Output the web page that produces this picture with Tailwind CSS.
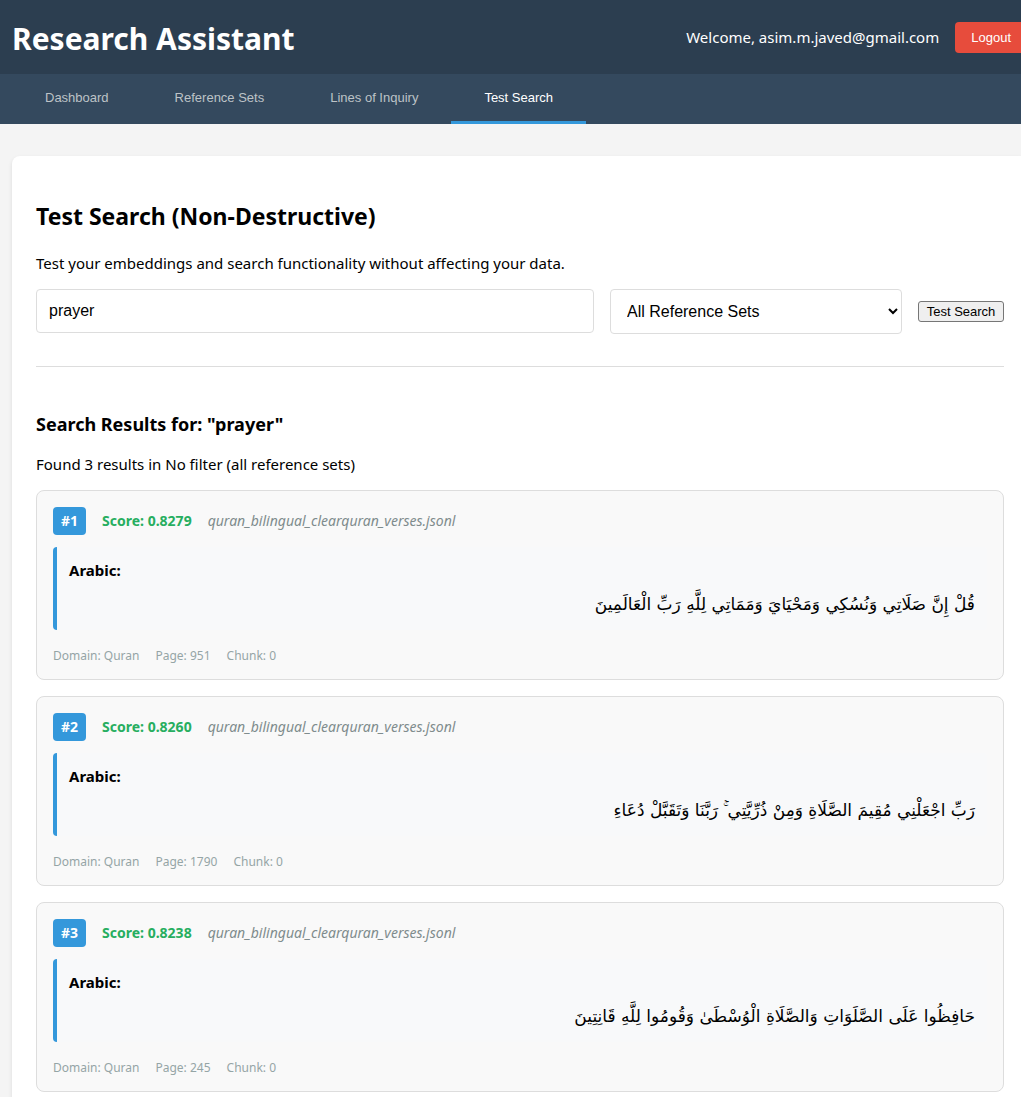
<!DOCTYPE html>
<html lang="en">
<head>
<meta charset="utf-8">
<meta name="viewport" content="width=device-width, initial-scale=1">
<title>Research Assistant</title>
<script src="https://cdn.jsdelivr.net/npm/@tailwindcss/browser@4"></script>
</head>
<body class="min-h-screen overflow-x-hidden bg-[#f4f4f4] font-['Segoe_UI','Noto_Sans',sans-serif] text-[15px] leading-6 text-black">
<header class="flex h-[74px] items-center justify-between bg-[#2c3e50] pl-3 text-white">
  <h1 class="pt-1 text-[30px] leading-10 font-bold">Research Assistant</h1>
  <div class="flex items-center gap-4">
    <span>Welcome, asim.m.javed@gmail.com</span>
    <button type="button" class="h-[31px] rounded-l bg-[#e74c3c] pr-2.5 pl-4 font-['Liberation_Sans',sans-serif] text-[13px] leading-[15px]">Logout</button>
  </div>
</header>
<nav class="flex h-[50px] bg-[#34495e] pl-3 font-['Liberation_Sans',sans-serif] text-[13px] leading-[15px] text-[#bdc3c7]">
  <button type="button" class="border-b-[3px] border-transparent px-[33px]">Dashboard</button>
  <button type="button" class="border-b-[3px] border-transparent px-[33px]">Reference Sets</button>
  <button type="button" class="border-b-[3px] border-transparent px-[33px]">Lines of Inquiry</button>
  <button type="button" class="border-b-[3px] border-[#3498db] px-[33px] text-white">Test Search</button>
</nav>
<main class="mt-8 ml-3 rounded-l-lg bg-white pt-[42px] pr-[17px] pb-12 pl-6 shadow-[0_2px_4px_rgba(0,0,0,0.1)]">
  <h2 class="text-[23px] leading-9 font-bold">Test Search (Non-Destructive)</h2>
  <p class="mt-[17px]">Test your embeddings and search functionality without affecting your data.</p>
  <form class="mt-3.5 flex items-center gap-4 font-['Liberation_Sans',sans-serif] text-base">
    <input type="text" value="prayer" aria-label="Search query" class="h-11 min-w-0 flex-1 self-start rounded border border-[#ddd] bg-white px-3">
    <select aria-label="Reference set" class="h-[45px] w-[292px] rounded border border-[#ddd] bg-white px-3">
      <option>All Reference Sets</option>
    </select>
    <button type="button" class="h-[21px] w-[86px] rounded-[3px] border border-[#767676] bg-[#efefef] text-[13px] leading-[15px]">Test Search</button>
  </form>
  <section class="mt-8 border-t border-[#ddd] pt-[43px]">
    <h3 class="text-[18px] leading-7 font-bold">Search Results for: "prayer"</h3>
    <p class="mt-3.5">Found 3 results in No filter (all reference sets)</p>
    <div class="mt-3.5 flex flex-col gap-4">
      <article class="rounded-lg border border-[#ddd] bg-[#f9f9f9] px-4 pt-4 pb-[15px]">
        <div class="flex items-center gap-4 text-[14px] leading-5">
          <span class="rounded bg-[#3498db] px-2 py-1 font-bold text-white">#1</span>
          <span class="font-bold text-[#27ae60]">Score: 0.8279</span>
          <span class="text-[#7f8c8d] italic">quran_bilingual_clearquran_verses.jsonl</span>
        </div>
        <div class="mt-3 rounded border-l-4 border-[#3498db] bg-[#f8f9fa] p-3">
          <strong class="block text-[15px] leading-[23px]">Arabic:</strong>
          <p dir="rtl" lang="ar" class="mt-[9px] font-['Segoe_UI','DejaVu_Sans',sans-serif] text-[17px] leading-[27px]">قُلْ إِنَّ صَلَاتِي وَنُسُكِي وَمَحْيَايَ وَمَمَاتِي لِلَّهِ رَبِّ الْعَالَمِينَ</p>
        </div>
        <div class="mt-[17px] flex gap-4 text-[12px] leading-[17px] text-[#95a5a6]"><span>Domain: Quran</span><span>Page: 951</span><span>Chunk: 0</span></div>
      </article>
      <article class="rounded-lg border border-[#ddd] bg-[#f9f9f9] px-4 pt-4 pb-[15px]">
        <div class="flex items-center gap-4 text-[14px] leading-5">
          <span class="rounded bg-[#3498db] px-2 py-1 font-bold text-white">#2</span>
          <span class="font-bold text-[#27ae60]">Score: 0.8260</span>
          <span class="text-[#7f8c8d] italic">quran_bilingual_clearquran_verses.jsonl</span>
        </div>
        <div class="mt-3 rounded border-l-4 border-[#3498db] bg-[#f8f9fa] p-3">
          <strong class="block text-[15px] leading-[23px]">Arabic:</strong>
          <p dir="rtl" lang="ar" class="mt-[9px] font-['Segoe_UI','DejaVu_Sans',sans-serif] text-[17px] leading-[27px]">رَبِّ اجْعَلْنِي مُقِيمَ الصَّلَاةِ وَمِنْ ذُرِّيَّتِي ۚ رَبَّنَا وَتَقَبَّلْ دُعَاءِ</p>
        </div>
        <div class="mt-[17px] flex gap-4 text-[12px] leading-[17px] text-[#95a5a6]"><span>Domain: Quran</span><span>Page: 1790</span><span>Chunk: 0</span></div>
      </article>
      <article class="rounded-lg border border-[#ddd] bg-[#f9f9f9] px-4 pt-4 pb-[15px]">
        <div class="flex items-center gap-4 text-[14px] leading-5">
          <span class="rounded bg-[#3498db] px-2 py-1 font-bold text-white">#3</span>
          <span class="font-bold text-[#27ae60]">Score: 0.8238</span>
          <span class="text-[#7f8c8d] italic">quran_bilingual_clearquran_verses.jsonl</span>
        </div>
        <div class="mt-3 rounded border-l-4 border-[#3498db] bg-[#f8f9fa] p-3">
          <strong class="block text-[15px] leading-[23px]">Arabic:</strong>
          <p dir="rtl" lang="ar" class="mt-[9px] font-['Segoe_UI','DejaVu_Sans',sans-serif] text-[17px] leading-[27px]">حَافِظُوا عَلَى الصَّلَوَاتِ وَالصَّلَاةِ الْوُسْطَىٰ وَقُومُوا لِلَّهِ قَانِتِينَ</p>
        </div>
        <div class="mt-[17px] flex gap-4 text-[12px] leading-[17px] text-[#95a5a6]"><span>Domain: Quran</span><span>Page: 245</span><span>Chunk: 0</span></div>
      </article>
    </div>
  </section>
</main>
</body>
</html>
